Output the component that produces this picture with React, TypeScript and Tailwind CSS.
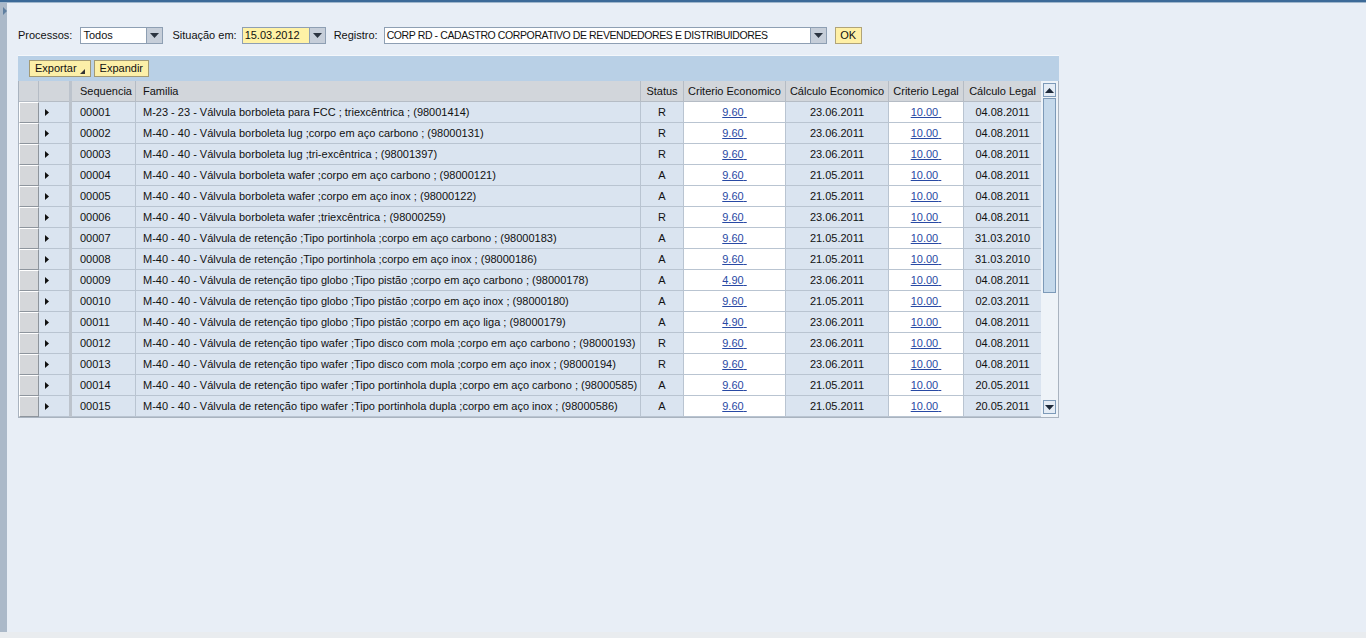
import React from 'react';

type Row = {
  seq: string;
  familia: string;
  status: string;
  critEco: string;
  calcEco: string;
  critLeg: string;
  calcLeg: string;
};

const rows: Row[] = [
  { seq: '00001', familia: 'M-23 - 23 - Válvula borboleta para FCC ; triexcêntrica ; (98001414)', status: 'R', critEco: '9.60', calcEco: '23.06.2011', critLeg: '10.00', calcLeg: '04.08.2011' },
  { seq: '00002', familia: 'M-40 - 40 - Válvula borboleta lug ;corpo em aço carbono ; (98000131)', status: 'R', critEco: '9.60', calcEco: '23.06.2011', critLeg: '10.00', calcLeg: '04.08.2011' },
  { seq: '00003', familia: 'M-40 - 40 - Válvula borboleta lug ;tri-excêntrica ; (98001397)', status: 'R', critEco: '9.60', calcEco: '23.06.2011', critLeg: '10.00', calcLeg: '04.08.2011' },
  { seq: '00004', familia: 'M-40 - 40 - Válvula borboleta wafer ;corpo em aço carbono ; (98000121)', status: 'A', critEco: '9.60', calcEco: '21.05.2011', critLeg: '10.00', calcLeg: '04.08.2011' },
  { seq: '00005', familia: 'M-40 - 40 - Válvula borboleta wafer ;corpo em aço inox ; (98000122)', status: 'A', critEco: '9.60', calcEco: '21.05.2011', critLeg: '10.00', calcLeg: '04.08.2011' },
  { seq: '00006', familia: 'M-40 - 40 - Válvula borboleta wafer ;triexcêntrica ; (98000259)', status: 'R', critEco: '9.60', calcEco: '23.06.2011', critLeg: '10.00', calcLeg: '04.08.2011' },
  { seq: '00007', familia: 'M-40 - 40 - Válvula de retenção ;Tipo portinhola ;corpo em aço carbono ; (98000183)', status: 'A', critEco: '9.60', calcEco: '21.05.2011', critLeg: '10.00', calcLeg: '31.03.2010' },
  { seq: '00008', familia: 'M-40 - 40 - Válvula de retenção ;Tipo portinhola ;corpo em aço inox ; (98000186)', status: 'A', critEco: '9.60', calcEco: '21.05.2011', critLeg: '10.00', calcLeg: '31.03.2010' },
  { seq: '00009', familia: 'M-40 - 40 - Válvula de retenção tipo globo ;Tipo pistão ;corpo em aço carbono ; (98000178)', status: 'A', critEco: '4.90', calcEco: '23.06.2011', critLeg: '10.00', calcLeg: '04.08.2011' },
  { seq: '00010', familia: 'M-40 - 40 - Válvula de retenção tipo globo ;Tipo pistão ;corpo em aço inox ; (98000180)', status: 'A', critEco: '9.60', calcEco: '21.05.2011', critLeg: '10.00', calcLeg: '02.03.2011' },
  { seq: '00011', familia: 'M-40 - 40 - Válvula de retenção tipo globo ;Tipo pistão ;corpo em aço liga ; (98000179)', status: 'A', critEco: '4.90', calcEco: '23.06.2011', critLeg: '10.00', calcLeg: '04.08.2011' },
  { seq: '00012', familia: 'M-40 - 40 - Válvula de retenção tipo wafer ;Tipo disco com mola ;corpo em aço carbono ; (98000193)', status: 'R', critEco: '9.60', calcEco: '23.06.2011', critLeg: '10.00', calcLeg: '04.08.2011' },
  { seq: '00013', familia: 'M-40 - 40 - Válvula de retenção tipo wafer ;Tipo disco com mola ;corpo em aço inox ; (98000194)', status: 'R', critEco: '9.60', calcEco: '23.06.2011', critLeg: '10.00', calcLeg: '04.08.2011' },
  { seq: '00014', familia: 'M-40 - 40 - Válvula de retenção tipo wafer ;Tipo portinhola dupla ;corpo em aço carbono ; (98000585)', status: 'A', critEco: '9.60', calcEco: '21.05.2011', critLeg: '10.00', calcLeg: '20.05.2011' },
  { seq: '00015', familia: 'M-40 - 40 - Válvula de retenção tipo wafer ;Tipo portinhola dupla ;corpo em aço inox ; (98000586)', status: 'A', critEco: '9.60', calcEco: '21.05.2011', critLeg: '10.00', calcLeg: '20.05.2011' },
];

const gridCols = 'grid grid-cols-[20px_30px_3px_64px_505px_43px_102px_103px_75px_78px]';

function DropButton() {
  return (
    <span className="flex h-full w-[16px] items-center justify-center border-l border-[#8e9fb3] bg-[#c6ced9]">
      <svg width="9" height="5" viewBox="0 0 9 5">
        <path d="M0 0h9L4.5 5z" fill="#2b3440" />
      </svg>
    </span>
  );
}

function Select({ value, width, bg = 'bg-white', text = '' }: { value: string; width: string; bg?: string; text?: string }) {
  return (
    <div className={`flex h-[17px] items-stretch border border-[#8e9fb3] ${bg} ${width}`}>
      <span className={`flex-1 overflow-hidden whitespace-nowrap pl-[2px] leading-[15px] ${text}`}>{value}</span>
      <DropButton />
    </div>
  );
}

function Link({ v }: { v: string }) {
  return <span className="whitespace-pre text-[#2849a4] underline">{v}&nbsp;</span>;
}

export default function App() {
  return (
    <div
      className="flex h-[638px] flex-col whitespace-nowrap bg-[#e8eef6] text-[11px] text-[#111]"
      style={{ fontFamily: '"Liberation Sans", Arial, sans-serif' }}
    >
      <div className="h-[2px] bg-[#3c6a98]" />
      <div className="h-[1px] bg-[#9fb6cc]" />
      <div className="flex flex-1">
        <div className="relative w-[7px] bg-[#abb9c9]">
          <svg className="absolute left-[3px] top-[4px]" width="4" height="8" viewBox="0 0 4 8">
            <path d="M0 0l4 4-4 4z" fill="#5f7fa0" />
          </svg>
        </div>
        <div className="flex-1 pl-[11px] pt-[24px]">
          <div className="flex h-[17px] items-center">
            <span className="mr-[8px]">Processos:</span>
            <Select value="Todos" width="w-[83px]" />
            <span className="ml-[9px] mr-[5px]">Situação em:</span>
            <Select value="15.03.2012" width="w-[84px]" bg="bg-[#fff2a6]" />
            <span className="ml-[8px] mr-[6px]">Registro:</span>
            <Select
              value="CORP RD - CADASTRO CORPORATIVO DE REVENDEDORES E DISTRIBUIDORES"
              width="w-[443px]"
              text="text-[10.5px] tracking-[-0.4px]"
            />
            <button className="ml-[8px] h-[17px] w-[27px] border border-[#b1a478] bg-[#fff0a6] leading-[15px]">OK</button>
          </div>

          <div className="mt-[11px] w-[1041px] border-t border-[#f4f7fb]">
            <div className="flex h-[25px] items-center gap-[3px] bg-[#b9d0e6] pl-[11px]">
              <button className="flex h-[17px] items-center border border-[#a39a74] bg-[#fcefa8] px-[5px] leading-[15px]">
                Exportar
                <svg className="ml-[3px] mt-[5px]" width="5" height="5" viewBox="0 0 5 5">
                  <path d="M5 0v5H0z" fill="#333" />
                </svg>
              </button>
              <button className="h-[17px] border border-[#a39a74] bg-[#fcefa8] px-[5px] leading-[15px]">Expandir</button>
            </div>

            <div className="flex border-l border-b border-[#a9b3bf] bg-[#e8eef6]">
              <div className="w-[1022px]">
                <div className={`${gridCols} h-[21px] bg-[#d2d6db]`}>
                  <div className="border-r border-b border-[#b5bcc5]" />
                  <div className="border-b border-[#b5bcc5]" />
                  <div className="bg-[#bcc3cc]" />
                  <div className="border-r border-b border-[#b5bcc5] pl-[8px] leading-[20px]">Sequencia</div>
                  <div className="border-r border-b border-[#b5bcc5] pl-[7px] leading-[20px]">Familia</div>
                  <div className="border-r border-b border-[#b5bcc5] text-center leading-[20px]">Status</div>
                  <div className="border-r border-b border-[#b5bcc5] text-center leading-[20px]">Criterio Economico</div>
                  <div className="border-r border-b border-[#b5bcc5] text-center leading-[20px]">Cálculo Economico</div>
                  <div className="border-r border-b border-[#b5bcc5] text-center leading-[20px]">Criterio Legal</div>
                  <div className="border-r border-b border-[#b5bcc5] text-center leading-[20px]">Cálculo Legal</div>
                </div>
                {rows.map((r) => (
                  <div key={r.seq} className={`${gridCols} h-[21px] bg-[#dae4f0]`}>
                    <div className="border-t border-l border-r border-b border-t-white border-l-white border-r-[#8e959d] border-b-[#8e959d] bg-[#d5d7da]" />
                    <div className="flex items-center border-b border-[#b9c4d1] pl-[6px]">
                      <svg width="4" height="7" viewBox="0 0 4 7">
                        <path d="M0 0l4 3.5L0 7z" fill="#111" />
                      </svg>
                    </div>
                    <div className="bg-[#bcc3cc]" />
                    <div className="border-r border-b border-[#b9c4d1] pl-[8px] leading-[20px]">{r.seq}</div>
                    <div className="overflow-hidden border-r border-b border-[#b9c4d1] pl-[7px] leading-[20px]">{r.familia}</div>
                    <div className="border-r border-b border-[#b9c4d1] text-center leading-[20px]">{r.status}</div>
                    <div className="border-r border-b border-[#b9c4d1] bg-white text-center leading-[20px]"><Link v={r.critEco} /></div>
                    <div className="border-r border-b border-[#b9c4d1] text-center leading-[20px]">{r.calcEco}</div>
                    <div className="border-r border-b border-[#b9c4d1] bg-white text-center leading-[20px]"><Link v={r.critLeg} /></div>
                    <div className="border-r border-b border-[#b9c4d1] text-center leading-[20px]">{r.calcLeg}</div>
                  </div>
                ))}
              </div>
              <div className="flex w-[18px] flex-col border-r border-[#a9b3bf] bg-[#eef3f8] px-[2px] pt-[2px] pb-[3px]">
                <div className="flex h-[14px] items-center justify-center border border-[#7d9ab8] bg-[#e4ecf5]">
                  <svg width="9" height="5" viewBox="0 0 9 5">
                    <path d="M0 5h9L4.5 0z" fill="#1d2a3a" />
                  </svg>
                </div>
                <div className="mt-[1px] h-[195px] border border-[#7d9ab8] bg-[#c5d9eb]" />
                <div className="flex-1" />
                <div className="flex h-[14px] items-center justify-center border border-[#7d9ab8] bg-[#e4ecf5]">
                  <svg width="9" height="5" viewBox="0 0 9 5">
                    <path d="M0 0h9L4.5 5z" fill="#1d2a3a" />
                  </svg>
                </div>
              </div>
            </div>
          </div>
        </div>
      </div>
      <div className="h-[6px] bg-[#e9ecef]" />
    </div>
  );
}
